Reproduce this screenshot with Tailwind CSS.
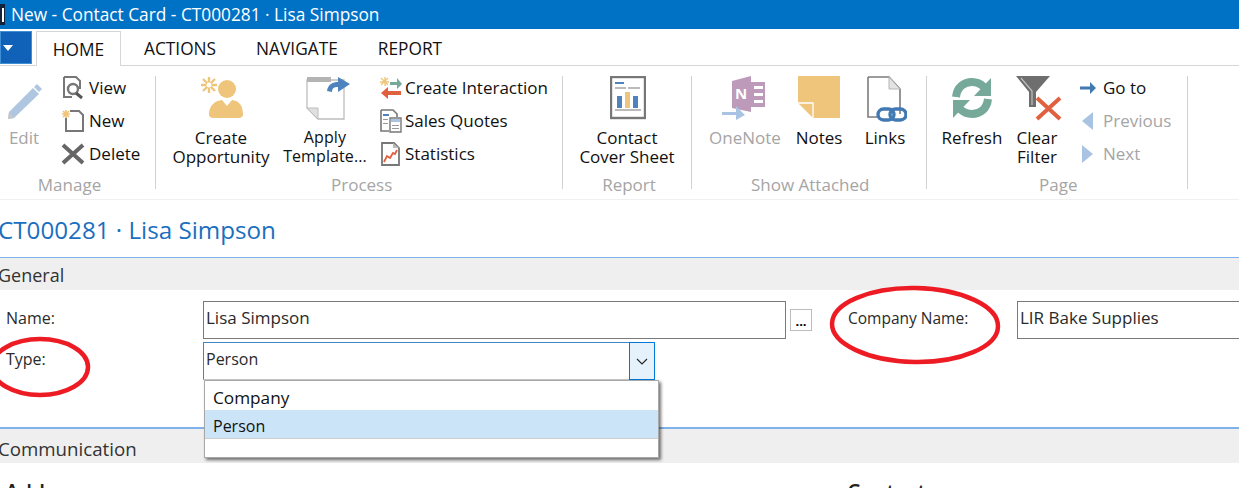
<!DOCTYPE html>
<html lang="en">
<head>
<meta charset="utf-8">
<title>New - Contact Card</title>
<script src="https://cdn.jsdelivr.net/npm/@tailwindcss/browser@4"></script>
</head>
<body class="m-0 bg-white">
<div class="relative w-[1239px] h-[488px] overflow-hidden bg-white font-['Open_Sans','Noto_Sans',sans-serif] text-[17px] leading-[19px] text-[#111]">

  <!-- title bar -->
  <div class="flex h-[29px] items-center bg-[#0072c6] text-white">
    <div class="flex h-[21px] w-[5px] items-center justify-center bg-[#14233c]"><div class="h-[14px] w-[2px] bg-white"></div></div>
    <span class="ml-[6px] text-[17.3px] whitespace-nowrap">New - Contact Card - CT000281 · Lisa Simpson</span>
  </div>

  <!-- tabs -->
  <div class="flex h-[37px] items-end border-b border-[#d6d6d6] pt-[2px] text-[17.3px]">
    <div class="mb-[1px] flex h-[33px] w-[32px] items-center border border-[#3f8fd6] bg-[#0f62b8] pl-[2px]">
      <svg width="10" height="6" viewBox="0 0 10 6"><path d="M0 0h10L5 6z" fill="#fff"/></svg>
    </div>
    <div class="-mb-px ml-[4px] flex h-[35px] w-[85px] items-center justify-center border border-b-0 border-[#d6d6d6] bg-white">HOME</div>
    <div class="flex h-[34px] items-center pl-[23px]">ACTIONS</div>
    <div class="flex h-[34px] items-center pl-[40px]">NAVIGATE</div>
    <div class="flex h-[34px] items-center pl-[40px]">REPORT</div>
  </div>

  <!-- ribbon -->
  <div class="flex h-[134px] border-b border-[#f0f0f0] pt-[10px]">

    <!-- Manage -->
    <div class="flex h-[113px] w-[156px] shrink-0 flex-col border-r border-[#d2d2d2]">
      <div class="flex h-[99px] shrink-0">
        <div class="flex w-[48px] flex-col items-center text-[#a5a5a5]">
          <svg class="mt-[6px]" width="36" height="38" viewBox="0 0 36 38"><path d="M8 36l-6 1 1-7L27 6l6 6z" fill="#afc6e0"/><path d="M28 5l3-3 5 5-3 3z" fill="#afc6e0"/><path d="M3 30l5 6-6 1z" fill="#c8c8c8"/></svg>
          <span class="mt-[8px]">Edit</span>
        </div>
        <div class="ml-[13px] -mt-[5px] flex flex-col">
          <div class="flex h-[33px] shrink-0 items-center"><svg width="24" height="24" viewBox="0 0 24 24"><path d="M3 1h12l4 4v8M3 1v20h8" fill="none" stroke="#777" stroke-width="2"/><circle cx="12" cy="13" r="5" fill="#fff" stroke="#777" stroke-width="2.4"/><path d="M15 17l6 5" stroke="#555" stroke-width="3"/></svg><span class="ml-[4px]">View</span></div>
          <div class="flex h-[33px] shrink-0 items-center"><svg width="24" height="24" viewBox="0 0 24 24"><path d="M5 9v13h17V6l-4-4h-9" fill="none" stroke="#777" stroke-width="2"/><path d="M5 1v8M1 5h8M2 2l6 6M8 2L2 8" stroke="#eec57a" stroke-width="1.7"/></svg><span class="ml-[4px]">New</span></div>
          <div class="flex h-[33px] shrink-0 items-center"><svg width="24" height="24" viewBox="0 0 24 24"><path d="M2 3l20 18M22 3L2 21" stroke="#666" stroke-width="4"/></svg><span class="ml-[4px]">Delete</span></div>
        </div>
      </div>
      <div class="text-center text-[#a5a5a5] pr-[18px] pl-[2px]">Manage</div>
    </div>

    <!-- Process -->
    <div class="flex h-[113px] w-[407px] shrink-0 flex-col border-r border-[#d2d2d2]">
      <div class="flex h-[99px] shrink-0">
        <div class="ml-[10px] flex w-[110px] flex-col items-center">
          <svg class="ml-[2px]" width="44" height="44" viewBox="0 0 44 44"><circle cx="27" cy="13" r="9" fill="#eec57a"/><path d="M9 39c0-10 6-14 13-15l5 6 5-6c7 1 11 5 11 15 0 1-2 3-4 3H13c-2 0-4-2-4-3z" fill="#eec57a"/><path d="M9 1v16M1 9h16M3 3l12 12M15 3L3 15" stroke="#eec57a" stroke-width="2.4"/><circle cx="9" cy="9" r="2.5" fill="#fff"/></svg>
          <span class="mt-[8px] text-center">Create<br>Opportunity</span>
        </div>
        <div class="flex w-[104px] flex-col items-center">
          <svg width="44" height="44" viewBox="0 0 44 44"><path d="M1 4h37v39H12L1 32z" fill="#fff" stroke="#bdbdbd" stroke-width="1.3"/><path d="M1 1h24v5H1z" fill="#b4b4b4"/><path d="M1 32l11 0v11z" fill="#e0e0e0" stroke="#bdbdbd"/><path d="M21 15c1-7 6-9 11-9V1l12 7-12 8v-5c-4 0-6 1-6 5z" fill="#4e83bd"/></svg>
          <span class="mt-[8px] mr-[6px] text-center text-[16px] tracking-[0.1px] whitespace-nowrap">Apply<br>Template...</span>
        </div>
        <div class="-ml-[1px] -mt-[5px] flex flex-col">
          <div class="flex h-[33px] shrink-0 items-center"><svg width="24" height="24" viewBox="0 0 24 24"><path d="M6 1v9M1 6h9M2 2l7 7M9 2L2 9" stroke="#eec57a" stroke-width="1.4"/><path d="M11 6h7V2l5 6-5 5V9h-7z" fill="#76a999"/><path d="M22 15H9v-4l-7 6 7 6v-4h13z" fill="#e0613f"/></svg><span class="ml-[2px]">Create Interaction</span></div>
          <div class="flex h-[33px] shrink-0 items-center"><svg width="24" height="24" viewBox="0 0 24 24"><path d="M2 1h12l4 4v3M2 1v21h8" fill="none" stroke="#777" stroke-width="1.6"/><path d="M4 5h6v2H4z" fill="#4e83bd"/><path d="M4 10h5v1H4zM4 14h5v1H4z" fill="#999"/><path d="M11 9h11v14H11z" fill="#fff" stroke="#777" stroke-width="1.4"/><path d="M12 10h9v3h-9z" fill="#a9c4e2"/><path d="M13 16h7v1h-7zM13 19h7v1h-7z" fill="#999"/></svg><span class="ml-[2px]">Sales Quotes</span></div>
          <div class="flex h-[33px] shrink-0 items-center"><svg width="24" height="24" viewBox="0 0 24 24"><path d="M3 1h12l5 5v17H3z" fill="#fff" stroke="#777" stroke-width="1.8"/><path d="M14 1v5h6z" fill="#bbb"/><path d="M5 20l3-6 3 2 3-5 2 1 2-4" fill="none" stroke="#e0613f" stroke-width="1.8"/></svg><span class="ml-[2px]">Statistics</span></div>
        </div>
      </div>
      <div class="pl-[175px] text-[#a5a5a5]">Process</div>
    </div>

    <!-- Report -->
    <div class="flex h-[113px] w-[129px] shrink-0 flex-col items-center border-r border-[#d2d2d2]">
      <div class="flex h-[99px] shrink-0 flex-col items-center">
        <svg class="ml-[2px]" width="36" height="44" viewBox="0 0 36 44"><rect x="1" y="1" width="34" height="41" fill="#fff" stroke="#777" stroke-width="2.4"/><path d="M5 6h9v2H5z" fill="#4e83bd"/><path d="M5 11h11v2H5zM18 11h12v2H18zM5 33h26v2H5z" fill="#bbb"/><path d="M7 20h5v12H7z" fill="#4e83bd"/><path d="M15 16h5v16h-5z" fill="#eec57a"/><path d="M23 20h5v12h-5z" fill="#4e83bd"/></svg>
        <span class="mt-[8px] text-center whitespace-nowrap">Contact<br>Cover Sheet</span>
      </div>
      <div class="pl-[4px] text-[#a5a5a5]">Report</div>
    </div>

    <!-- Show Attached -->
    <div class="flex h-[113px] w-[235px] shrink-0 flex-col border-r border-[#d2d2d2]">
      <div class="flex h-[99px] shrink-0">
        <div class="ml-[15px] flex w-[76px] flex-col items-center text-[#a5a5a5]">
          <svg width="48" height="44" viewBox="0 0 48 44"><path d="M11 5l19-5v36l-19-4z" fill="#bd9aba"/><path d="M30 6h14v25H30z" fill="#bd9aba"/><path d="M33 10h9v3h-9zM33 17h9v3h-9zM33 24h9v3h-9z" fill="#fff"/><text x="14" y="23" fill="#fff" font-size="15" font-weight="700" font-family="Open Sans">N</text><path d="M1 36h14v-6l9 9-9 5v-5H1z" fill="#a9c4e2"/></svg>
          <span class="mt-[8px]">OneNote</span>
        </div>
        <div class="ml-[6px] flex w-[60px] flex-col items-center">
          <svg width="42" height="44" viewBox="0 0 42 44"><path d="M0 0h42v42H15L0 27z" fill="#eec57a"/><path d="M0 27h15v15" fill="none" stroke="#fff" stroke-width="1.3"/></svg>
          <span class="mt-[8px]">Notes</span>
        </div>
        <div class="ml-[6px] flex w-[60px] flex-col items-center">
          <svg class="ml-[2px]" width="42" height="46" viewBox="0 0 42 46"><path d="M3 1h21l11 12v25M3 1v40h12" fill="none" stroke="#7c7c7c" stroke-width="1.6"/><path d="M24 1v12h11z" fill="#e3e3e3" stroke="#b5b5b5"/><rect x="13" y="33" width="16" height="11" rx="5.5" fill="none" stroke="#4179b3" stroke-width="3.4"/><rect x="25" y="33" width="16" height="11" rx="5.5" fill="none" stroke="#4179b3" stroke-width="3.4"/></svg>
          <span class="mt-[6px]">Links</span>
        </div>
      </div>
      <div class="pl-[59px] text-[#a5a5a5]">Show Attached</div>
    </div>

    <!-- Page -->
    <div class="flex h-[113px] w-[261px] shrink-0 flex-col border-r border-[#d2d2d2]">
      <div class="flex h-[99px] shrink-0">
        <div class="ml-[10px] flex w-[70px] flex-col items-center">
          <svg width="42" height="44" viewBox="0 0 42 44"><path d="M5 21C6 11 13 6 21 6c5 0 9 2 12 5" fill="none" stroke="#76a999" stroke-width="8"/><path d="M40 2v18H23z" fill="#76a999"/><path d="M37 23C36 33 29 38 21 38c-5 0-9-2-12-5" fill="none" stroke="#76a999" stroke-width="8"/><path d="M2 42V24h17z" fill="#76a999"/></svg>
          <span class="mt-[8px] whitespace-nowrap">Refresh</span>
        </div>
        <div class="flex w-[60px] flex-col items-center">
          <svg class="ml-[3px]" width="46" height="46" viewBox="0 0 46 46"><path d="M0 0h34L20 16v15h-7V16z" fill="#6e6e6e"/><path d="M5 2l11 13v14" fill="none" stroke="#c0c0c0" stroke-width="1.2"/><path d="M21 22l23 21M44 22L21 43" stroke="#e0613f" stroke-width="4"/></svg>
          <span class="mt-[6px] text-center">Clear<br>Filter</span>
        </div>
        <div class="ml-[12px] -mt-[5px] flex flex-col">
          <div class="flex h-[33px] shrink-0 items-center"><svg width="18" height="18" viewBox="0 0 18 18"><path d="M1 7.500h10V3l6 6-6 6v-4.500H1z" fill="#4179b3"/></svg><span class="ml-[6px]">Go to</span></div>
          <div class="flex h-[33px] shrink-0 items-center text-[#a5a5a5]"><svg width="18" height="18" viewBox="0 0 18 18"><path d="M14 0v18L3 9z" fill="#a9c4e2"/></svg><span class="ml-[6px]">Previous</span></div>
          <div class="flex h-[33px] shrink-0 items-center text-[#a5a5a5]"><svg width="18" height="18" viewBox="0 0 18 18"><path d="M3 0v18l11-9z" fill="#a9c4e2"/></svg><span class="ml-[6px]">Next</span></div>
        </div>
      </div>
      <div class="pl-[112px] text-[#a5a5a5]">Page</div>
    </div>
  </div>

  <!-- heading -->
  <div class="-ml-[2px] flex h-[57px] items-center whitespace-nowrap pt-[2px] text-[24.2px] text-[#1a6fc0]">CT000281 · Lisa Simpson</div>

  <!-- General -->
  <div class="-ml-[2px] flex h-[33px] items-center border-t border-[#7fb2ea] bg-[#efefef] pt-[2px] text-[18px] text-[#333]">General</div>

  <!-- form -->
  <div class="h-[137px] pt-[11px] text-[16px] text-[#2a2a2a]">
    <div class="flex h-[38px]">
      <div class="flex w-[203px] items-center pb-[4px] pl-[6px]">Name:</div>
      <div class="flex h-[38px] w-[583px] items-center border border-[#7a7a7a] pb-[5px] pl-[2px] text-[17px]">Lisa Simpson</div>
      <div class="ml-[4px] mt-[8px] flex h-[22px] w-[22px] items-end justify-center border border-[#bdbdbd] pb-[5px] text-[13px] font-bold leading-[8px] text-black">...</div>
      <div class="ml-[36px] flex w-[169px] items-center pb-[4px] text-[15.500px]">Company Name:</div>
      <div class="flex h-[38px] flex-1 items-center border border-r-0 border-[#7a7a7a] pb-[5px] pl-[2px] text-[17px]">LIR Bake Supplies</div>
    </div>
    <div class="mt-[3px] flex h-[38px]">
      <div class="flex w-[203px] items-center pb-[4px] pl-[6px]">Type:</div>
      <div class="flex h-[38px] w-[426px] items-center border-t border-b border-l border-[#3f86c4] border-b-[#c8c8c8] pb-[4px] pl-[2px]">Person</div>
      <div class="flex h-[38px] w-[26px] items-center justify-center border border-[#0078d7] bg-[#e5f1fb]">
        <svg width="12" height="7" viewBox="0 0 12 7"><path d="M1 1l5 5 5-5" fill="none" stroke="#222" stroke-width="1.1"/></svg>
      </div>
    </div>
  </div>

  <!-- Communication -->
  <div class="-ml-[2px] flex h-[36px] items-center border-t-2 border-[#7fb2ea] bg-[#efefef] pt-[4px] text-[18.700px] text-[#333]">Communication</div>

  <!-- cut-off sections -->
  <div class="flex pt-[20px] text-[21px] font-semibold text-[#222]">
    <div class="w-[847px] pl-[5px]">Address</div>
    <div>Contact</div>
  </div>

  <!-- dropdown -->
  <div class="absolute left-[204px] top-[380px] h-[78px] w-[455px] border border-[#a8a8a8] bg-white text-[16px] shadow-[2px_2px_3px_rgba(0,0,0,0.55)]">
    <div class="flex h-[29px] items-center pl-[8px] pt-[4px] text-[17.200px]">Company</div>
    <div class="flex h-[29px] items-center border-b border-[#cfcfcf] bg-[#cce4f7] pl-[8px] pt-[4px]">Person</div>
  </div>

  <!-- red hand-drawn ellipses -->
  <svg class="absolute left-0 top-0" width="1239" height="488" viewBox="0 0 1239 488" fill="none">
    <ellipse cx="915" cy="325" rx="83" ry="37" stroke="#ed1c24" stroke-width="4.5" transform="rotate(1 915 325)"/>
    <ellipse cx="40" cy="367" rx="48" ry="28" stroke="#ed1c24" stroke-width="4.5"/>
  </svg>
</div>
</body>
</html>
